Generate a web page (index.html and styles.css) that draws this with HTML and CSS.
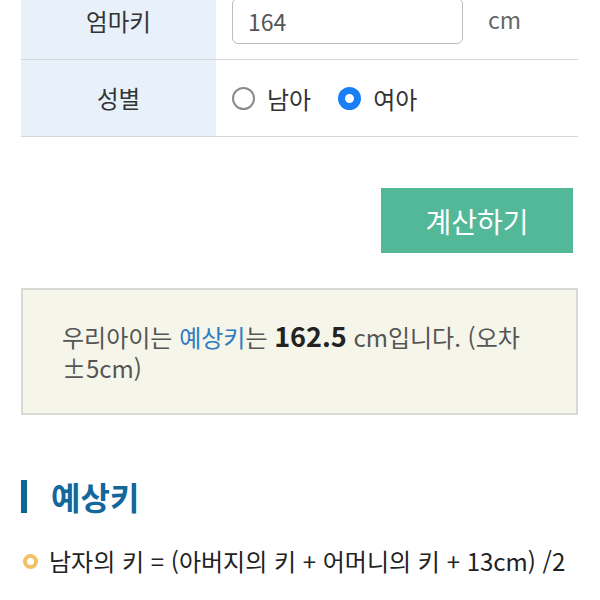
FILE: index.html
```html
<!DOCTYPE html>
<html lang="ko">
<head>
  <meta charset="UTF-8">
  <title>예상키 계산기</title>
  <link rel="stylesheet" href="styles.css">
</head>
<body>

<div class="wrap">
  <!-- 입력 폼 -->
  <div class="form">
    <div class="row first">
      <div class="label">엄마키</div>
      <div class="field">
        <input type="text" class="height-input" value="164">
        <span class="unit">cm</span>
      </div>
    </div>
    <div class="row">
      <div class="label">성별</div>
      <div class="field">
        <label class="radio"><input type="radio" name="sex"> 남아</label>
        <label class="radio"><input type="radio" name="sex" checked> 여아</label>
      </div>
    </div>
  </div>

  <div class="actions">
    <button class="calcBtn">계산하기</button>
  </div>

  <!-- 결과 -->
  <div class="result">
    우리아이는 <span class="hl">예상키</span>는 <strong>162.5</strong> cm입니다. (오차±5cm)
  </div>

  <h2 class="heading">예상키</h2>
  <ul class="formula">
    <li>남자의 키 = (아버지의 키 + 어머니의 키 + 13cm) /2</li>
  </ul>
</div>

</body>
</html>
```

FILE: styles.css
```css
body {
  margin: 0;
  font-family: "Noto Sans CJK KR", "Noto Sans", sans-serif;
  color: #333;
  background: #fff;
}
.wrap {
  padding: 0 22px 0 21px;
}
.form .row {
  display: flex;
  height: 77px;
  box-sizing: border-box;
  border-bottom: 1px solid #d8d8d8;
}
.form .row.first {
  margin-top: -17px;
}
.label {
  width: 195px;
  background: #e8f1fa;
  display: flex;
  align-items: center;
  justify-content: center;
  font-size: 23.5px;
  color: #333;
}
.field {
  flex: 1;
  display: flex;
  align-items: center;
  padding-left: 16px;
}
.height-input {
  width: 231px;
  height: 46px;
  box-sizing: border-box;
  border: 1px solid #bdbdbd;
  border-radius: 6px;
  padding: 0 15px;
  font-family: inherit;
  font-size: 23px;
  color: #555;
}
.unit {
  margin-left: 25px;
  margin-top: -4px;
  font-size: 23px;
  color: #666;
}
.radio {
  display: flex;
  align-items: center;
  gap: 12px;
  font-size: 24px;
  color: #333;
  margin-right: 27px;
}
.radio input {
  appearance: none;
  margin: 0;
  width: 23px;
  height: 23px;
  box-sizing: border-box;
  border: 2px solid #8a8a8a;
  border-radius: 50%;
  background: #fff;
}
.radio input:checked {
  border: 7px solid #1a7ef5;
}
.actions {
  display: flex;
  justify-content: flex-end;
  margin-top: 51px;
  padding-right: 5px;
}
.calcBtn {
  width: 192px;
  height: 65px;
  border: none;
  background: #52b898;
  color: #fff;
  font-family: inherit;
  font-size: 28px;
}
.result {
  margin-top: 35px;
  border: 2px solid #d9d9d3;
  background: #f6f5ea;
  padding: 30px 45px 30px 39px;
  font-size: 24px;
  line-height: 31px;
  color: #555;
}
.result .hl {
  color: #2f7cc1;
}
.result strong {
  font-size: 27px;
  color: #222;
}
.heading {
  display: flex;
  align-items: center;
  gap: 24px;
  margin: 65px 0 0;
  font-size: 32px;
  line-height: 33px;
  color: #12679b;
}
.heading::before {
  content: "";
  width: 6px;
  height: 33px;
  background: #0f6596;
}
.formula {
  list-style: none;
  margin: 32px 0 0;
  padding: 0;
}
.formula li {
  display: flex;
  align-items: center;
  gap: 11px;
  font-size: 24px;
  line-height: 32px;
  color: #222;
}
.formula li::before {
  content: "";
  width: 15px;
  height: 15px;
  box-sizing: border-box;
  margin-left: 2px;
  border: 4px solid #f3c064;
  border-radius: 50%;
}
```
